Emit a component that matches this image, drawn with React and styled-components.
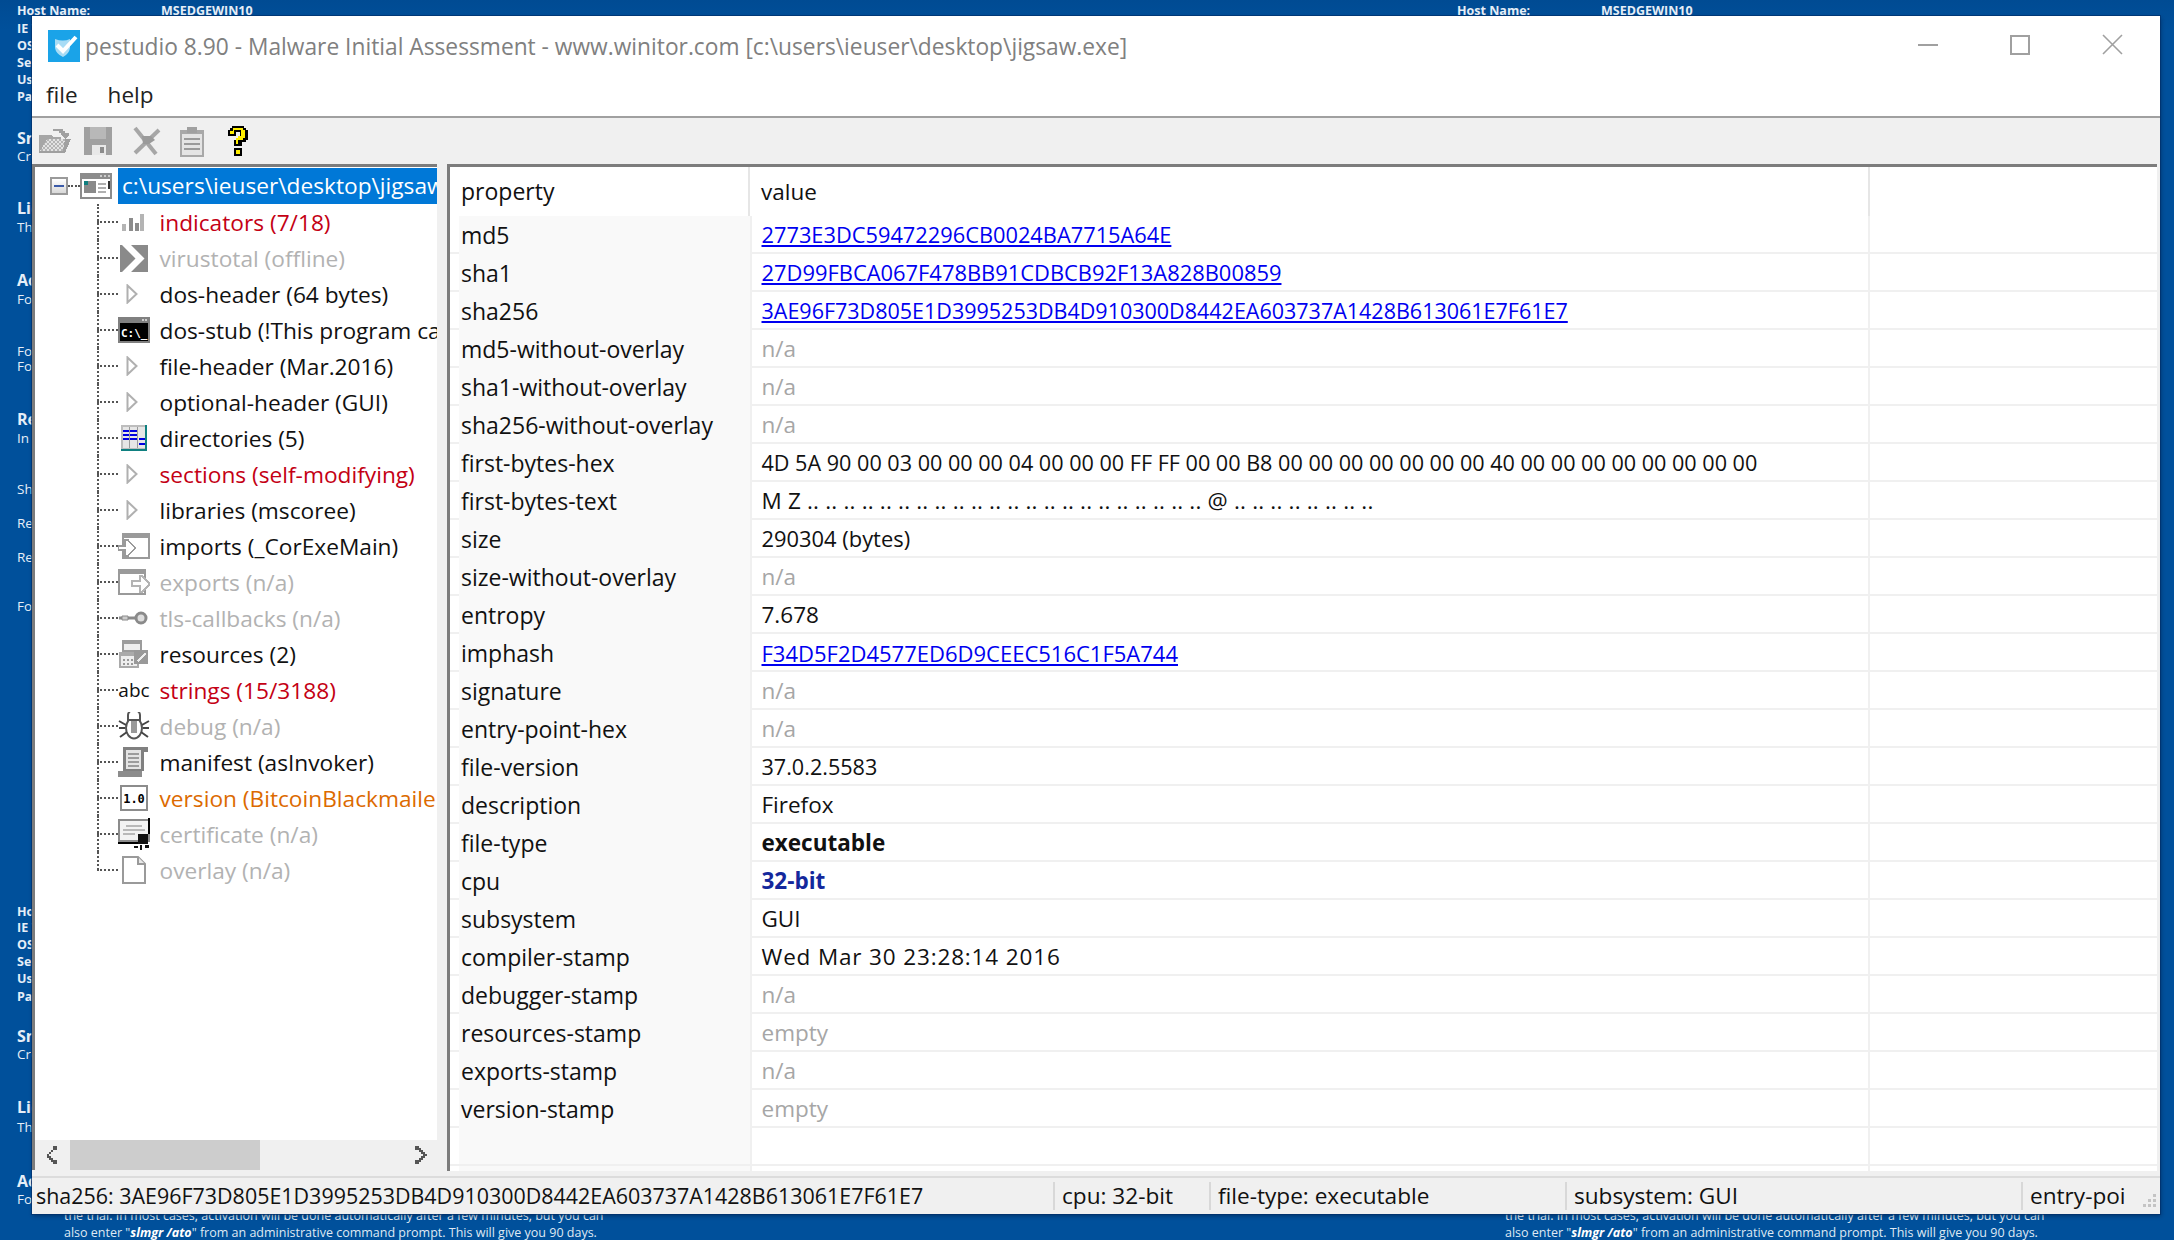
import React from 'react';
import styled, { createGlobalStyle } from 'styled-components';

const GlobalStyle = createGlobalStyle`
    html, body {
        margin: 0;
        padding: 0;
        width: 2174px;
        height: 1240px;
        overflow: hidden;
        background: #00509b;
    }
    * { box-sizing: border-box; }
`;

const Desktop = styled.div`
    position: relative;
    width: 2174px;
    height: 1240px;
    background: linear-gradient(#004b93, #00509b 30px);
    font-family: "Open Sans", "Liberation Sans", sans-serif;
    overflow: hidden;
`;

// wallpaper text, sits behind the window on the free canvas
const WallBlock = styled.div`
    position: absolute;
    left: ${p => p.$x}px;
    top: ${p => p.$y}px;
    width: 700px;
    color: #e6eef7;
    font-size: 12.5px;
    line-height: 17px;
    white-space: nowrap;
`;

const WallLine = styled.div`
    margin-top: ${p => p.$gap || 0}px;
    font-weight: ${p => (p.$bold ? 700 : 400)};
    font-size: ${p => (p.$big ? 16 : p.$bold ? 12.5 : 13.5)}px;
    span { display: inline-block; width: 144px; }
`;

const WallNote = styled.div`
    font-size: 12.5px;
    line-height: 16.5px;
    color: #dfe9f4;
    b { font-style: italic; color: #fff; }
`;

const Window = styled.div`
    position: absolute;
    left: 32px;
    top: 16px;
    width: 2128px;
    height: 1198px;
    display: flex;
    flex-direction: column;
    background: #fff;
    font-size: 22.5px;
    color: #111;
    box-shadow: 0 0 0 1px rgba(0, 50, 110, 0.75), 1px 2px 4px rgba(0, 20, 50, 0.45);
`;

const TitleBar = styled.div`
    height: 60px;
    flex: none;
    display: flex;
    align-items: center;
    padding: 0 2px 0 16px;
`;

const TitleText = styled.div`
    flex: 1;
    margin-left: 5px;
    color: #808080;
    font-size: 22.75px;
    white-space: nowrap;
`;

const WinButton = styled.div`
    width: 92px;
    height: 60px;
    display: flex;
    align-items: center;
    justify-content: center;
    svg { display: block; margin-top: -3px; }
`;

const MenuBar = styled.div`
    height: 36px;
    flex: none;
    display: flex;
    align-items: center;
    gap: 30px;
    padding-left: 14px;
    color: #222;
`;

const Toolbar = styled.div`
    height: 48px;
    flex: none;
    display: flex;
    align-items: center;
    margin-top: 4px;
    background: #f0f0f0;
    border-top: 2px solid #a0a0a0;
`;

const ToolSlot = styled.div`
    width: ${p => p.$w}px;
    height: 32px;
    display: flex;
    justify-content: center;
    align-items: center;
    flex: none;
`;

const Body = styled.div`
    flex: 1;
    min-height: 0;
    display: flex;
    background: #f0f0f0;
`;

const TreePane = styled.div`
    width: 405px;
    flex: none;
    display: flex;
    flex-direction: column;
    border-top: 3px solid #7c7c7c;
    border-left: 3px solid #7c7c7c;
    background: #fff;
    margin-bottom: 6px;
    font-size: 22.7px;
`;

const TreeScroll = styled.div`
    flex: 1;
    min-height: 0;
    overflow: hidden;
    padding-top: 1px;
`;

const TreeRootRow = styled.div`
    height: 36px;
    display: flex;
    align-items: center;
    padding-left: 15px;
    white-space: nowrap;
`;

const MinusBox = styled.div`
    width: 18px;
    height: 18px;
    flex: none;
    display: flex;
    align-items: center;
    justify-content: center;
    border: 2px solid #9a9a9a;
    background: linear-gradient(#fff, #d8d8d8);
    &::after {
        content: "";
        width: 10px;
        height: 2px;
        background: #3a5aa8;
    }
`;

const DotsH = styled.div`
    width: ${p => p.$w}px;
    height: 0;
    flex: none;
    border-top: 2px dotted #555;
`;

const Selected = styled.div`
    flex: 1;
    min-width: 0;
    height: 36px;
    margin-left: 6px;
    padding-left: 4px;
    background: #0078d7;
    color: #fff;
    line-height: 35px;
    overflow: hidden;
`;

const TreeRow = styled.div`
    position: relative;
    height: 36px;
    display: flex;
    align-items: center;
    padding-left: 62px;
    white-space: nowrap;
    overflow: hidden;
    &::before {
        content: "";
        position: absolute;
        left: 62px;
        top: 0;
        height: ${p => (p.$last ? '18px' : '36px')};
        border-left: 2px dotted #555;
    }
`;

const IconSlot = styled.div`
    width: 34px;
    height: 34px;
    flex: none;
    margin-left: -1px;
    margin-right: 8.5px;
    display: flex;
    align-items: center;
    justify-content: center;
    font-size: 19px;
    color: #111;
`;

const TreeLabel = styled.span`
    color: ${p => p.$color || '#111'};
`;

const HScroll = styled.div`
    height: 30px;
    flex: none;
    display: flex;
    align-items: center;
    background: #f0f0f0;
`;

const ScrollArrow = styled.div`
    width: 32px;
    height: 30px;
    flex: none;
    display: flex;
    align-items: center;
    justify-content: center;
`;

const ScrollTrack = styled.div`
    flex: 1;
    height: 30px;
`;

const ScrollThumb = styled.div`
    width: 190px;
    height: 30px;
    margin-left: 3px;
    background: #cdcdcd;
`;

const Splitter = styled.div`
    width: 10px;
    flex: none;
`;

const TablePane = styled.div`
    flex: 1;
    min-width: 0;
    margin: 0 3px 5px 0;
    border-top: 3px solid #7c7c7c;
    border-left: 3px solid #7c7c7c;
    background: #fff;
    overflow: hidden;
    white-space: nowrap;
`;

const Row = styled.div`
    display: grid;
    grid-template-columns: 300px 1120px 1fr;
    height: ${p => (p.$head ? 49 : 38)}px;
    border-bottom: ${p => (p.$head ? 'none' : '2px solid #f0f0f0')};
`;

const PropCell = styled.div`
    margin-left: ${p => (p.$head ? 0 : 9)}px;
    padding-left: ${p => (p.$head ? 11 : 2)}px;
    background: ${p => (p.$head ? '#fff' : '#f9f9f9')};
    font-size: 23px;
    line-height: ${p => (p.$head ? 49 : 38)}px;
    border-right: 2px solid ${p => (p.$head ? '#e6e6e6' : '#f9f9f9')};
`;

const ValueCell = styled.div`
    padding-left: ${p => (p.$head ? 11 : 9.5)}px;
    line-height: ${p => (p.$head ? 49 : 38)}px;
    border-left: ${p => (p.$head ? 'none' : '2px solid #f0f0f0')};
    border-right: 2px solid ${p => (p.$head ? '#e6e6e6' : '#f0f0f0')};
    color: ${p => p.$color || 'inherit'};
    font-weight: ${p => (p.$bold ? 700 : 400)};
    font-size: ${p => p.$size || 22.5}px;
    letter-spacing: ${p => p.$track || 0}px;
`;

const HashLink = styled.a`
    color: #0000f0;
    text-decoration: underline;
`;

const StatusBar = styled.div`
    height: 38px;
    flex: none;
    display: flex;
    align-items: center;
    background: #f0f0f0;
    border-top: 2px solid #dcdcdc;
    position: relative;
`;

const StatusItem = styled.div`
    width: ${p => p.$w}px;
    flex: ${p => (p.$w ? 'none' : '1')};
    height: 28px;
    line-height: 28px;
    padding-left: ${p => (p.$first ? 4 : 7)}px;
    border-left: ${p => (p.$first ? 'none' : '2px solid #d8d8d8')};
    font-size: ${p => (p.$first ? 21.45 : 22.6)}px;
    white-space: nowrap;
    overflow: hidden;
`;

const Grip = styled.div`
    position: absolute;
    right: 3px;
    bottom: 4px;
    line-height: 0;
`;

const G = ({ children, w = 32, h = 32 }) => (
    <svg width={w} height={h} viewBox={`0 0 ${w} ${h}`} shapeRendering="crispEdges">
        {children}
    </svg>
);

const AppLogo = () => (
    <svg width="32" height="32" viewBox="0 0 32 32">
        <rect width="32" height="32" fill="#1aa3e8" />
        <path d="M7 9 Q15 12 22 9 L22 18 Q21 24 15 27 Q8 24 7 18 Z" fill="#a8dcf5" />
        <path d="M9 15 L15 21 L28 7" fill="none" stroke="#fff" strokeWidth="4" />
    </svg>
);

const OpenIcon = () => (
    <G>
        <defs>
            <pattern id="dither" width="4" height="4" patternUnits="userSpaceOnUse">
                <rect width="4" height="4" fill="#b4b4b4" />
                <rect width="2" height="2" fill="#e2e2e2" />
                <rect x="2" y="2" width="2" height="2" fill="#e2e2e2" />
            </pattern>
        </defs>
        <path d="M0 10h12l2 2h8v4H8L0 28z" fill="#a6a6a6" />
        <path d="M0 28l8-14h24l-6 14z" fill="url(#dither)" />
        <path d="M26 14h6l-6 14H0v-2h24z" fill="#a0a0a0" />
        <path d="M14 4h10v2h2v2h4v2l-4 4-4-4V8h-2V6h-6z" fill="#a0a0a0" />
    </G>
);

const SaveIcon = () => (
    <G>
        <path d="M2 2h28v28H2z" fill="#a0a0a0" />
        <path d="M8 2h16v12H8z" fill="#b8b8b8" />
        <path d="M24 20h-14v10h14z" fill="#e8e8e8" />
        <path d="M18 22h4v6h-4z" fill="#8c8c8c" />
    </G>
);

const CutIcon = () => (
    <svg width="32" height="32" viewBox="0 0 32 32">
        <path d="M5 3L26 29" stroke="#a6a6a6" strokeWidth="4" />
        <path d="M29 5L5 28" stroke="#a6a6a6" strokeWidth="4" />
        <path d="M12 11h9l4 4-6 4h-6z" fill="#9a9a9a" />
    </svg>
);

const ClipIcon = () => (
    <G>
        <path d="M4 5h24v27H4z" fill="#a8a8a8" />
        <path d="M6 9h20v21H6z" fill="#e4e4e4" />
        <path d="M11 2h10v6H11z" fill="#a0a0a0" />
        <path d="M8 13h16v2H8zM8 18h16v2H8zM8 23h16v2H8z" fill="#9a9a9a" />
    </G>
);

const HelpIcon = () => (
    <svg width="24" height="30" viewBox="0 0 24 30" shapeRendering="crispEdges">
        <path d="M6 0h12v2h2v2h2v10h-2v2h-4v4H8v-6h2v-2h4V6h-4v4H2V4h2V2h2zM8 22h8v8H8z" fill="#000" />
        <path d="M7 2h10v2h2v8h-2v2h-5v4h-2v-6h2v-2h3V4H8v4H4V5h3zM10 24h4v4h-4z" fill="#ffee00" />
    </svg>
);

const ExeIcon = () => (
    <G h={28}>
        <path d="M0 1h32v26H0z" fill="#8c8c8c" />
        <path d="M2 7h28v18H2z" fill="#fff" />
        <path d="M4 9h12v12H4z" fill="#8a8a8a" />
        <path d="M4 9h4v4H4z" fill="#0f7f7f" />
        <path d="M18 11h8v2h-8zM18 15h8v2h-8zM18 19h8v2h-8z" fill="#b0b0b0" />
        <path d="M28 9h2v8h-2z" fill="#333" />
        <path d="M20 3h2v2h-2zM24 3h2v2h-2zM28 3h2v2h-2z" fill="#ccc" />
    </G>
);

const BarsIcon = () => (
    <G w={24} h={18}>
        <path d="M0 11h4v7H0z" fill="#b4b4b4" />
        <path d="M7 5h4v13H7z" fill="#8c8c8c" />
        <path d="M13 10h4v8h-4z" fill="#8c8c8c" />
        <path d="M18 1h4v17h-4z" fill="#b4b4b4" />
    </G>
);

const VtIcon = () => (
    <svg width="28" height="27" viewBox="0 0 28 27">
        <path d="M0 0h28v27H0z" fill="#8a8a8a" />
        <path d="M2 0h9l13.500 13.500L11 27H2l13.500-13.500z" fill="#fff" />
    </svg>
);

const ArrowIcon = () => (
    <svg width="16" height="20" viewBox="0 0 16 20">
        <path d="M1.500 1.500L10.500 10L1.500 18.500z" fill="#fff" stroke="#b0b0b0" strokeWidth="2" />
    </svg>
);

const StubIcon = () => (
    <svg width="32" height="26" viewBox="0 0 32 26" shapeRendering="crispEdges">
        <path d="M0 0h32v26H0z" fill="#808080" />
        <path d="M2 6h28v18H2z" fill="#000" />
        <path d="M24 2h2v2h-2zM27 2h2v2h-2z" fill="#ccc" />
        <text x="3" y="20" fontFamily="DejaVu Sans Mono" fontSize="11" fontWeight="700" fill="#fff">C:\_</text>
    </svg>
);

const DirsIcon = () => (
    <G w={26} h={26}>
        <path d="M0 0h26v26H0z" fill="#bdbdbd" />
        <path d="M2 2h22v21H2z" fill="#e6e6e6" />
        <path d="M2 5h14v2H2zM2 9h14v2H2zM2 13h14v2H2zM18 13h6v2h-6zM18 18h6v2h-6z" fill="#0000e0" />
        <path d="M0 24h26v2H0zM24 0h2v26h-2z" fill="#0f8080" />
        <path d="M8 2h1v21H8zM16 2h1v21h-1z" fill="#9a9a9a" />
    </G>
);

const ImportIcon = () => (
    <G h={28}>
        <path d="M4 1h28v26H4z" fill="#9a9a9a" />
        <path d="M6 6h24v19H6z" fill="#fff" />
        <path d="M0 14h7V8h3l7 8-7 8h-3v-6H0z" fill="#fff" stroke="#9a9a9a" strokeWidth="1.500" />
    </G>
);

const ExportIcon = () => (
    <G h={28}>
        <path d="M0 1h28v26H0z" fill="#9a9a9a" />
        <path d="M2 6h24v19H2z" fill="#fff" />
        <path d="M14 13h8V8h2l8 8-8 8h-2v-6h-8z" fill="#fff" stroke="#b4b4b4" strokeWidth="1.500" />
    </G>
);

const KeyIcon = () => (
    <svg width="30" height="14" viewBox="0 0 30 14">
        <circle cx="22" cy="7" r="5" fill="#ddd" stroke="#8a8a8a" strokeWidth="3" />
        <path d="M0 7h16" stroke="#8a8a8a" strokeWidth="3" />
        <path d="M3 5h6v4H3z" fill="#ccc" stroke="#8a8a8a" />
    </svg>
);

const ResIcon = () => (
    <G h={28}>
        <path d="M4 0h20v12H4z" fill="#9c9c9c" />
        <path d="M6 4h16v6H6z" fill="#eee" />
        <path d="M1 12h20v16H1z" fill="#aaa" />
        <path d="M3 16h16v10H3z" fill="#eee" />
        <path d="M5 19h2v2H5zM9 19h2v2H9zM13 19h2v2h-2zM5 23h2v2H5zM9 23h2v2H9zM13 23h2v2h-2z" fill="#999" />
        <path d="M16 10h14v14H16z" fill="#999" />
        <path d="M19 20l8-8 1 2-8 8z" fill="#eee" />
    </G>
);

const BugIcon = () => (
    <svg width="32" height="28" viewBox="0 0 32 28">
        <ellipse cx="16" cy="16" rx="8" ry="10.500" fill="#fff" stroke="#555" strokeWidth="2" />
        <path d="M10 3a6 5 0 0 1 12 0v5H10z" fill="#fff" stroke="#555" strokeWidth="2" />
        <path d="M13 9h6v12h-6z" fill="#999" />
        <path d="M1 9l7 4M1 16h6M2 25l7-5M31 9l-7 4M31 16h-6M30 25l-7-5" stroke="#444" strokeWidth="2" />
    </svg>
);

const ManifestIcon = () => (
    <G h={30}>
        <path d="M5 0h25v5h-4v19H5z" fill="#808080" />
        <path d="M8 3h15v19H8z" fill="#e4e4e4" />
        <path d="M10 6h11v2H10zM10 10h11v2H10zM10 14h11v2H10zM10 18h11v2H10z" fill="#9c9c9c" />
        <path d="M0 24h24v6H0z" fill="#8c8c8c" />
    </G>
);

const VersionIcon = () => (
    <svg width="28" height="26" viewBox="0 0 28 26" shapeRendering="crispEdges">
        <path d="M0 0h28v26H0z" fill="#8c8c8c" />
        <path d="M2 2h24v22H2z" fill="#fff" />
        <text x="14" y="18" textAnchor="middle" fontFamily="DejaVu Sans Mono" fontSize="12" fontWeight="700" fill="#000">1.0</text>
    </svg>
);

const CertIcon = () => (
    <G h={32}>
        <path d="M0 1h32v23H0z" fill="#8c8c8c" />
        <path d="M2 3h28v19H2z" fill="#f2f2f2" />
        <path d="M8 7h16v2H8zM5 11h22v2H5zM5 15h12v2H5z" fill="#b8b8b8" />
        <path d="M0 24h20v2H0zM30 0h2v16h-2z" fill="#000" />
        <path d="M20 16h10v10H20zM16 28h4v2h-4zM22 27h2v5h-2zM27 27h4v3h-4z" fill="#111" />
    </G>
);

const PageIcon = () => (
    <svg width="24" height="28" viewBox="0 0 24 28">
        <path d="M1 1h15l7 7v19H1z" fill="#fff" stroke="#9a9a9a" strokeWidth="2" />
        <path d="M16 1v7h7" fill="#e8e8e8" stroke="#9a9a9a" strokeWidth="2" />
    </svg>
);

const Chevron = ({ left }) => (
    <svg width="14" height="18" viewBox="0 0 14 18" shapeRendering="crispEdges">
        <path d={left ? 'M9 0h4v4H9v2H7v2H5v2h2v2h2v2h4v4H9v-2H7v-2H5v-2H3V8h2V6h2V4h2z' : 'M1 0h4v2h2v2h2v2h2v2h2v2h-2v2H9v2H7v2H5v2H1v-4h4v-2h2v-2h2V8H7V6H5V4H1z'} fill="#555" />
    </svg>
);

const WinMin = () => (
    <svg width="20" height="2"><rect width="20" height="2" fill="#a0a0a0" /></svg>
);
const WinMax = () => (
    <svg width="20" height="20"><rect x="1" y="1" width="18" height="18" fill="none" stroke="#a0a0a0" strokeWidth="2" /></svg>
);
const WinClose = () => (
    <svg width="21" height="21"><path d="M1 1L20 20M20 1L1 20" stroke="#a0a0a0" strokeWidth="1.600" /></svg>
);

const GRAY = '#b2b2b2';
const RED = '#c40014';
const ORANGE = '#dc6a00';

const treeRows = [
    { icon: <BarsIcon />, label: 'indicators (7/18)', color: RED },
    { icon: <VtIcon />, label: 'virustotal (offline)', color: GRAY },
    { icon: <ArrowIcon />, label: 'dos-header (64 bytes)' },
    { icon: <StubIcon />, label: 'dos-stub (!This program cannot be run in DOS mode.)' },
    { icon: <ArrowIcon />, label: 'file-header (Mar.2016)' },
    { icon: <ArrowIcon />, label: 'optional-header (GUI)' },
    { icon: <DirsIcon />, label: 'directories (5)' },
    { icon: <ArrowIcon />, label: 'sections (self-modifying)', color: RED },
    { icon: <ArrowIcon />, label: 'libraries (mscoree)' },
    { icon: <ImportIcon />, label: 'imports (_CorExeMain)' },
    { icon: <ExportIcon />, label: 'exports (n/a)', color: GRAY },
    { icon: <KeyIcon />, label: 'tls-callbacks (n/a)', color: GRAY },
    { icon: <ResIcon />, label: 'resources (2)' },
    { icon: 'abc', label: 'strings (15/3188)', color: RED },
    { icon: <BugIcon />, label: 'debug (n/a)', color: GRAY },
    { icon: <ManifestIcon />, label: 'manifest (asInvoker)' },
    { icon: <VersionIcon />, label: 'version (BitcoinBlackmailer.exe)', color: ORANGE },
    { icon: <CertIcon />, label: 'certificate (n/a)', color: GRAY },
    { icon: <PageIcon />, label: 'overlay (n/a)', color: GRAY },
];

const NA = '#a6a6a6';

// name, value, kind, font size, tracking
const tableRows = [
    ['md5', '2773E3DC59472296CB0024BA7715A64E', 'link', 21.8],
    ['sha1', '27D99FBCA067F478BB91CDBCB92F13A828B00859', 'link', 21.9],
    ['sha256', '3AE96F73D805E1D3995253DB4D910300D8442EA603737A1428B613061E7F61E7', 'link', 21.5],
    ['md5-without-overlay', 'n/a', 'na'],
    ['sha1-without-overlay', 'n/a', 'na'],
    ['sha256-without-overlay', 'n/a', 'na'],
    ['first-bytes-hex', '4D 5A 90 00 03 00 00 00 04 00 00 00 FF FF 00 00 B8 00 00 00 00 00 00 00 40 00 00 00 00 00 00 00 00', '', 21.6],
    ['first-bytes-text', `M Z ${'.. '.repeat(22)}@ ${'.. '.repeat(8)}`, '', 22.5, 0.18],
    ['size', '290304 (bytes)', '', 21.9],
    ['size-without-overlay', 'n/a', 'na'],
    ['entropy', '7.678'],
    ['imphash', 'F34D5F2D4577ED6D9CEEC516C1F5A744', 'link', 22],
    ['signature', 'n/a', 'na'],
    ['entry-point-hex', 'n/a', 'na'],
    ['file-version', '37.0.2.5583', '', 21.6],
    ['description', 'Firefox'],
    ['file-type', 'executable', 'bold'],
    ['cpu', '32-bit', 'cpu'],
    ['subsystem', 'GUI'],
    ['compiler-stamp', 'Wed Mar 30 23:28:14 2016', '', 22.5, 0.85],
    ['debugger-stamp', 'n/a', 'na'],
    ['resources-stamp', 'empty', 'na'],
    ['exports-stamp', 'n/a', 'na'],
    ['version-stamp', 'empty', 'na'],
];

const wallTop = [
    { t: 'IE Version:', bold: true, gap: 1 },
    { t: 'OS Build:', bold: true },
    { t: 'Service Pack:', bold: true },
    { t: 'User Name:', bold: true },
    { t: 'Password:', bold: true },
    { t: 'Snapshot', big: true, gap: 25 },
    { t: 'Create a snapshot', gap: 1 },
    { t: 'License', big: true, gap: 35 },
    { t: 'The trial', gap: 2 },
    { t: 'Activation', big: true, gap: 36 },
    { t: 'For Windows', gap: 2 },
    { t: 'For Server', gap: 35 },
    { t: 'For Client', gap: -2 },
    { t: 'Rearm', big: true, gap: 36 },
    { t: 'In most cases', gap: 2 },
    { t: 'Shut down', gap: 34 },
    { t: 'Restart', gap: 17 },
    { t: 'Rearm', gap: 17 },
    { t: 'For more', gap: 32 },
];

const wallBottom = [
    { t: 'Host Name:', bold: true },
    { t: 'IE Version:', bold: true, gap: -1 },
    { t: 'OS Build:', bold: true },
    { t: 'Service Pack:', bold: true },
    { t: 'User Name:', bold: true },
    { t: 'Password:', bold: true, gap: 1 },
    { t: 'Snapshot', big: true, gap: 23 },
    { t: 'Create a snapshot', gap: 1 },
    { t: 'License', big: true, gap: 36 },
    { t: 'The trial', gap: 3 },
    { t: 'Activation', big: true, gap: 37 },
    { t: 'For Windows', gap: 1 },
];

const WallLines = ({ lines }) => lines.map((l, i) => (
    <WallLine key={i} $bold={l.bold || l.big} $big={l.big} $gap={l.gap}>{l.t}</WallLine>
));

const HostLine = () => (
    <WallLine $bold><span>Host Name:</span>MSEDGEWIN10</WallLine>
);

const activation = (
    <>
        the trial. In most cases, activation will be done automatically after a few minutes, but you can<br />
        also enter "<b>slmgr /ato</b>" from an administrative command prompt. This will give you 90 days.
    </>
);

const App = () => {
    return (
        <Desktop>
            <GlobalStyle />
            <WallBlock $x={17} $y={2}>
                <HostLine />
                <WallLines lines={wallTop} />
            </WallBlock>
            <WallBlock $x={17} $y={903}>
                <WallLines lines={wallBottom} />
            </WallBlock>
            <WallBlock $x={1457} $y={2}>
                <HostLine />
            </WallBlock>
            <WallBlock $x={64} $y={1208}><WallNote>{activation}</WallNote></WallBlock>
            <WallBlock $x={1505} $y={1208}><WallNote>{activation}</WallNote></WallBlock>

            <Window>
                <TitleBar>
                    <AppLogo />
                    <TitleText>pestudio 8.90 - Malware Initial Assessment - www.winitor.com [c:\users\ieuser\desktop\jigsaw.exe]</TitleText>
                    <WinButton><WinMin /></WinButton>
                    <WinButton><WinMax /></WinButton>
                    <WinButton><WinClose /></WinButton>
                </TitleBar>
                <MenuBar>
                    <span>file</span>
                    <span>help</span>
                </MenuBar>
                <Toolbar>
                    <ToolSlot $w={46}><OpenIcon /></ToolSlot>
                    <ToolSlot $w={40}><SaveIcon /></ToolSlot>
                    <ToolSlot $w={56}><CutIcon /></ToolSlot>
                    <ToolSlot $w={36}><ClipIcon /></ToolSlot>
                    <ToolSlot $w={56}><HelpIcon /></ToolSlot>
                </Toolbar>
                <Body>
                    <TreePane>
                        <TreeScroll>
                            <TreeRootRow>
                                <MinusBox />
                                <DotsH $w={12} />
                                <ExeIcon />
                                <Selected>c:\users\ieuser\desktop\jigsaw.exe</Selected>
                            </TreeRootRow>
                            {treeRows.map((r, i) => (
                                <TreeRow key={r.label} $last={i === treeRows.length - 1}>
                                    <DotsH $w={21} />
                                    <IconSlot>{r.icon}</IconSlot>
                                    <TreeLabel $color={r.color}>{r.label}</TreeLabel>
                                </TreeRow>
                            ))}
                        </TreeScroll>
                        <HScroll>
                            <ScrollArrow><Chevron left /></ScrollArrow>
                            <ScrollThumb />
                            <ScrollTrack />
                            <ScrollArrow><Chevron /></ScrollArrow>
                        </HScroll>
                    </TreePane>
                    <Splitter />
                    <TablePane>
                        <Row $head>
                            <PropCell $head>property</PropCell>
                            <ValueCell $head>value</ValueCell>
                            <div />
                        </Row>
                        {tableRows.map(([name, value, kind, size, track]) => (
                            <Row key={name}>
                                <PropCell>{name}</PropCell>
                                <ValueCell
                                    $color={kind === 'na' ? NA : kind === 'cpu' ? '#14289c' : undefined}
                                    $bold={kind === 'bold' || kind === 'cpu'}
                                    $size={size}
                                    $track={track}
                                >
                                    {kind === 'link' ? <HashLink>{value}</HashLink> : value}
                                </ValueCell>
                                <div />
                            </Row>
                        ))}
                        <Row><PropCell /><ValueCell /><div /></Row>
                        <Row><PropCell /><ValueCell /><div /></Row>
                    </TablePane>
                </Body>
                <StatusBar>
                    <StatusItem $first $w={1021}>sha256: 3AE96F73D805E1D3995253DB4D910300D8442EA603737A1428B613061E7F61E7</StatusItem>
                    <StatusItem $w={156}>cpu: 32-bit</StatusItem>
                    <StatusItem $w={356}>file-type: executable</StatusItem>
                    <StatusItem $w={456}>subsystem: GUI</StatusItem>
                    <StatusItem>entry-poi</StatusItem>
                    <Grip>
                        <svg width="16" height="16" shapeRendering="crispEdges">
                            <path d="M12 0h3v3h-3zM7 5h3v3H7zM12 5h3v3h-3zM2 10h3v3H2zM7 10h3v3H7zM12 10h3v3h-3z" fill="#c4c4c4" />
                        </svg>
                    </Grip>
                </StatusBar>
            </Window>
        </Desktop>
    );
};

export default App;
